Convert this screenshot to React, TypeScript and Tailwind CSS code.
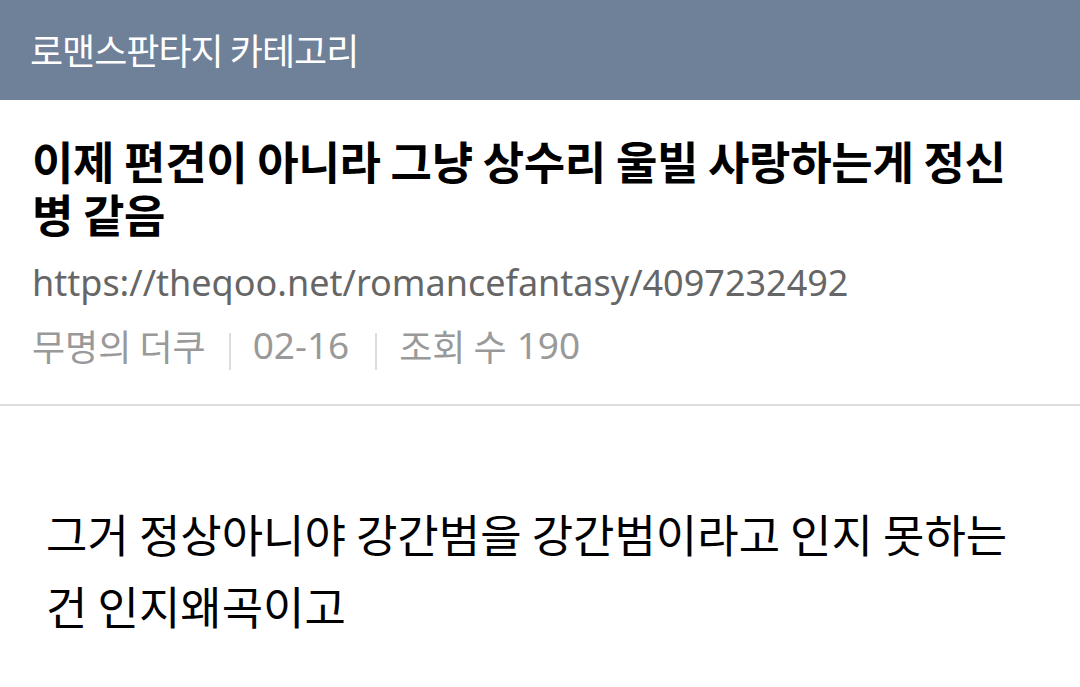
import React from "react";

export default function App() {
  const kr = { fontFamily: '"Noto Sans CJK KR", "Noto Sans", sans-serif' };
  const lat = { fontFamily: '"Noto Sans", "Noto Sans CJK KR", sans-serif' };
  return (
    <div className="w-[1080px] h-[687px] bg-white overflow-hidden" style={kr}>
      <div className="h-[100px] bg-[#6f8099] flex items-center pl-[30px]">
        <span className="text-white text-[36px] tracking-[-1px] leading-none pb-[2px]">로맨스판타지 카테고리</span>
      </div>
      <div className="pl-[32px] pr-[40px] pt-[34px] border-b-[2px] border-[#dddddd] pb-[34px]">
        <h1 className="text-[45px] font-bold leading-[53px] tracking-[-0.3px] text-black">
          이제 편견이 아니라 그냥 상수리 울빌 사랑하는게 정신병 같음
        </h1>
        <div className="mt-[21px] text-[36px] leading-[44px] text-[#666666]" style={lat}>
          https://theqoo.net/romancefantasy/4097232492
        </div>
        <div className="mt-[18px] flex items-start text-[36px] leading-[44px] text-[#999999]">
          <span>무명의 더쿠</span>
          <span className="ml-[23px] mr-[22px] mt-[10px] w-[2px] h-[37px] bg-[#dddddd]" />
          <span className="text-[37px]" style={lat}>02-16</span>
          <span className="ml-[26px] mr-[22px] mt-[10px] w-[2px] h-[37px] bg-[#dddddd]" />
          <span>조회 수</span>
          <span className="ml-[10px] text-[37px]" style={lat}>190</span>
        </div>
      </div>
      <div className="pl-[46px] pr-[40px] pt-[92px] text-[45px] leading-[72px] text-black">
        그거 정상아니야 강간범을 강간범이라고 인지 못하는 건 인지왜곡이고
      </div>
    </div>
  );
}
